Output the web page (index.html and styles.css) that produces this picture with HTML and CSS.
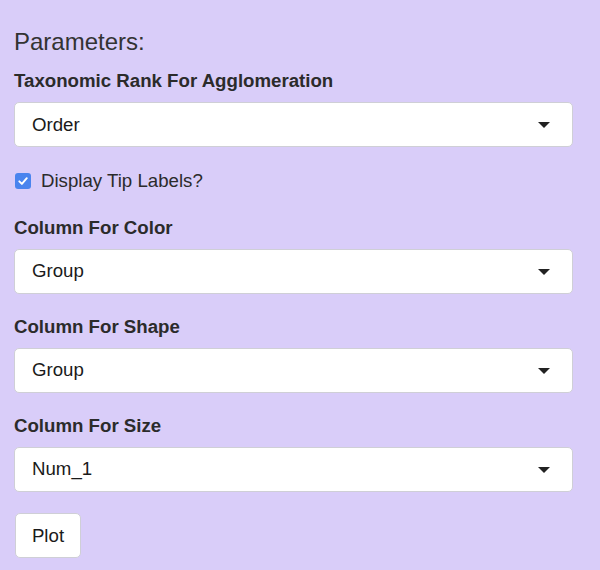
FILE: index.html
```html
<!DOCTYPE html>
<html>
<head>
<meta charset="utf-8">
<link rel="stylesheet" href="styles.css">
</head>
<body>
<div class="panel">
  <h3 class="title">Parameters:</h3>
  <div class="group">
    <label class="label">Taxonomic Rank For Agglomeration</label>
    <div class="select"><span>Order</span><span class="caret"></span></div>
  </div>
  <div class="check-row">
    <span class="checkbox"><svg width="12" height="12" viewBox="0 0 12 12"><path d="M2.3 6.3 L4.9 8.9 L9.8 3.2" fill="none" stroke="#fff" stroke-width="1.9" stroke-linecap="round" stroke-linejoin="round"/></svg></span>
    <span class="check-text">Display Tip Labels?</span>
  </div>
  <div class="group">
    <label class="label">Column For Color</label>
    <div class="select"><span>Group</span><span class="caret"></span></div>
  </div>
  <div class="group">
    <label class="label">Column For Shape</label>
    <div class="select"><span>Group</span><span class="caret"></span></div>
  </div>
  <div class="group">
    <label class="label">Column For Size</label>
    <div class="select"><span>Num_1</span><span class="caret"></span></div>
  </div>
  <button class="btn">Plot</button>
</div>
</body>
</html>
```
FILE: styles.css
```css
html, body {
  margin: 0;
  padding: 0;
  background: #d9cdf9;
  font-family: "Liberation Sans", Arial, sans-serif;
  color: #333;
}
.panel {
  width: 559px;
  padding: 29px 27px 0 14px;
}
.title {
  margin: 0 0 13px 0;
  font-size: 24px;
  font-weight: normal;
  line-height: 26.4px;
  color: #333;
}
.group {
  margin-bottom: 20px;
}
.label {
  display: block;
  font-size: 18.67px;
  font-weight: bold;
  line-height: 26.67px;
  margin-bottom: 7px;
  color: #2b2b2b;
}
.select {
  box-sizing: border-box;
  height: 45.33px;
  background: #fff;
  border: 1px solid #cfcfd6;
  border-radius: 5px;
  display: flex;
  align-items: center;
  justify-content: space-between;
  padding: 0 22px 0 17px;
  font-size: 18.67px;
  color: #1a1a1a;
}
.caret {
  width: 0;
  height: 0;
  border-left: 6.5px solid transparent;
  border-right: 6.5px solid transparent;
  border-top: 6.5px solid #222;
  margin-top: 1px;
}
.check-row {
  display: flex;
  align-items: center;
  margin: 1px 0 21px 1px;
  height: 26.67px;
}
.checkbox {
  width: 16px;
  height: 16px;
  background: #4a84ee;
  border-radius: 3px;
  display: flex;
  align-items: center;
  justify-content: center;
  margin-right: 10px;
}
.check-text {
  font-size: 18.67px;
  color: #2b2b2b;
}
.btn {
  box-sizing: border-box;
  width: 66px;
  height: 45px;
  background: #fff;
  border: 1px solid #cfcfd6;
  border-radius: 5px;
  font-family: "Liberation Sans", Arial, sans-serif;
  font-size: 18.67px;
  color: #1a1a1a;
  margin: 1px 0 0 1px;
  padding: 0;
}
```
